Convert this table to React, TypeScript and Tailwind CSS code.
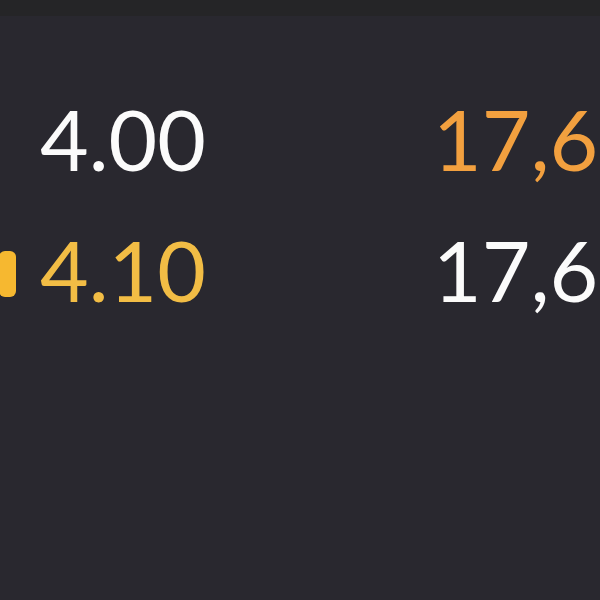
export default function App() {
  return (
    <div className="w-[600px] h-[600px] overflow-hidden bg-[#29282f] flex flex-col" style={{ fontFamily: 'Lato, "DejaVu Sans", sans-serif' }}>
      <div className="h-4 bg-[#252527] shrink-0" />
      <div className="flex flex-col gap-[47px] pt-[81px]">
        <div className="grid grid-cols-[40px_393px_167px] h-[84px] items-center text-[84px] leading-none whitespace-nowrap">
          <div />
          <div className="text-[#fbfbfb]">4.00</div>
          <div className="text-[#f2a03f]">17,6</div>
        </div>
        <div className="grid grid-cols-[40px_393px_167px] h-[84px] items-center text-[84px] leading-none whitespace-nowrap">
          <div className="h-full flex items-center">
            <div className="w-[17px] h-[46px] -ml-[1px] mt-[8px] rounded-[6px] bg-[#f6b830]" />
          </div>
          <div className="text-[#f2bd45]">4.10</div>
          <div className="text-[#fbfbfb]">17,6</div>
        </div>
      </div>
    </div>
  );
}
